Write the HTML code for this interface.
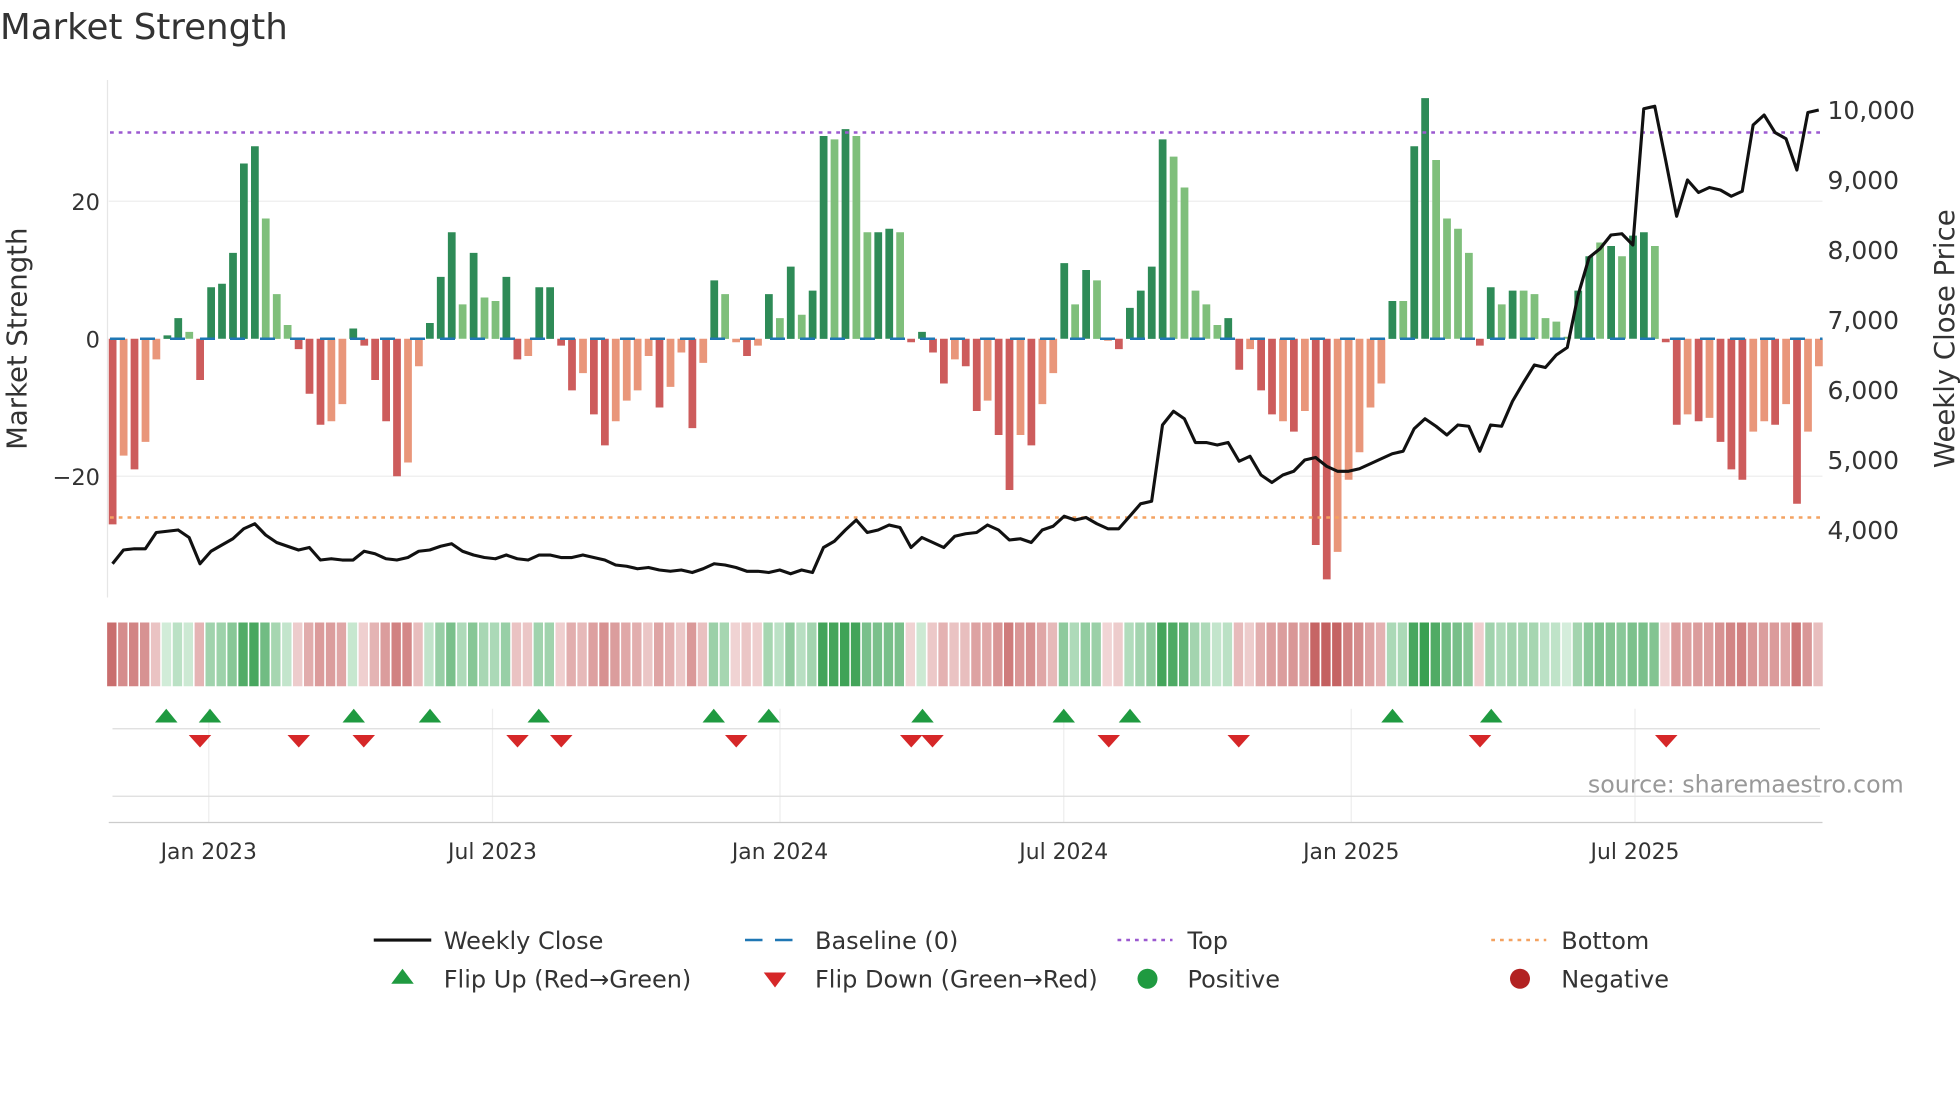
<!DOCTYPE html>
<html><head><meta charset="utf-8"><style>
html,body{margin:0;padding:0;background:#fff;}
svg{display:block;font-family:"DejaVu Sans","Liberation Sans",sans-serif;}
</style></head><body>
<svg id="s" width="1960" height="1102" viewBox="0 0 1568 881.6" xmlns="http://www.w3.org/2000/svg">
<rect width="1568" height="882" fill="#fff"/>
<text x="0" y="31" font-size="28.5" fill="#333">Market Strength</text>
<line x1="86" y1="64" x2="86" y2="478" stroke="#e6e6e6"/>
<line x1="87" y1="161" x2="1458" y2="161" stroke="#eee"/>
<line x1="87" y1="381" x2="1458" y2="381" stroke="#eee"/>
<g id="bars"></g>
<line x1="88" y1="271" x2="1458" y2="271" stroke="#1f77b4" stroke-width="2" stroke-dasharray="12,12"/>
<line x1="88" y1="106" x2="1458" y2="106" stroke="#9b59d0" stroke-width="2" stroke-dasharray="3,4"/>
<line x1="88" y1="414" x2="1458" y2="414" stroke="#f4a261" stroke-width="2" stroke-dasharray="3,4"/>
<polyline id="price" fill="none" stroke="#111" stroke-width="2.5" stroke-linejoin="round"/>
<g font-size="18" fill="#333">
<text x="80" y="168" text-anchor="end">20</text>
<text x="80" y="278" text-anchor="end">0</text>
<text x="80" y="388" text-anchor="end">−20</text>
</g>
<g font-size="20" fill="#333">
<text x="1462" y="95">10,000</text>
<text x="1462" y="151">9,000</text>
<text x="1462" y="207">8,000</text>
<text x="1462" y="263">7,000</text>
<text x="1462" y="319">6,000</text>
<text x="1462" y="375">5,000</text>
<text x="1462" y="431">4,000</text>
</g>
<text transform="translate(21,271) rotate(-90)" text-anchor="middle" font-size="22" fill="#333">Market Strength</text>
<text transform="translate(1563,271) rotate(-90)" text-anchor="middle" font-size="22" fill="#333">Weekly Close Price</text>
<g id="heat"></g>
<g stroke="#eee">
<line x1="167" y1="567" x2="167" y2="658"/><line x1="394" y1="567" x2="394" y2="658"/>
<line x1="624" y1="567" x2="624" y2="658"/><line x1="851" y1="567" x2="851" y2="658"/>
<line x1="1081" y1="567" x2="1081" y2="658"/><line x1="1308" y1="567" x2="1308" y2="658"/>
</g>
<line x1="90" y1="583" x2="1456" y2="583" stroke="#ddd"/>
<line x1="90" y1="637" x2="1456" y2="637" stroke="#ddd"/>
<line x1="87" y1="658" x2="1458" y2="658" stroke="#ccc"/>
<g id="marks"></g>
<text x="1523" y="634" text-anchor="end" font-size="19" fill="#999">source: sharemaestro.com</text>
<g font-size="17.5" fill="#333" text-anchor="middle">
<text x="167" y="687">Jan 2023</text><text x="394" y="687">Jul 2023</text>
<text x="624" y="687">Jan 2024</text><text x="851" y="687">Jul 2024</text>
<text x="1081" y="687">Jan 2025</text><text x="1308" y="687">Jul 2025</text>
</g>
<g font-size="19.2" fill="#333">
<line x1="299" y1="752" x2="345" y2="752" stroke="#111" stroke-width="2.5"/>
<text x="355" y="759">Weekly Close</text>
<line x1="596" y1="752" x2="640" y2="752" stroke="#1f77b4" stroke-width="2" stroke-dasharray="14,10"/>
<text x="652" y="759">Baseline (0)</text>
<line x1="894" y1="752" x2="938" y2="752" stroke="#9b59d0" stroke-width="2" stroke-dasharray="3,4"/>
<text x="950" y="759">Top</text>
<line x1="1193" y1="752" x2="1237" y2="752" stroke="#f4a261" stroke-width="2" stroke-dasharray="3,4"/>
<text x="1249" y="759">Bottom</text>
<polygon points="313,787 331,787 322,775" fill="#1f9a40"/>
<text x="355" y="790">Flip Up (Red→Green)</text>
<polygon points="611,778 629,778 620,790" fill="#d62728"/>
<text x="652" y="790">Flip Down (Green→Red)</text>
<circle cx="918" cy="783" r="8" fill="#1f9a40"/>
<text x="950" y="790">Positive</text>
<circle cx="1216" cy="783" r="8" fill="#b22222"/>
<text x="1249" y="790">Negative</text>
</g>
</svg>
<script>
var V="-27d -17l -19d -15l -3l .5d 3d 1l -6d 7.5d 8d 12.5d 25.5d 28d 17.5l 6.5l 2l -1.5d -8d -12.5d -12l -9.5l 1.5d -1d -6d -12d -20d -18l -4l 2.3d 9d 15.5d 5l 12.5d 6l 5.5l 9d -3d -2.5l 7.5d 7.5d -1d -7.5d -5l -11d -15.5d -12l -9l -7.5l -2.5l -10d -7l -2l -13d -3.5l 8.5d 6.5l -.5l -2.5d -1l 6.5d 3l 10.5d 3.5l 7d 29.5d 29l 30.5d 29.5l 15.5l 15.5d 16d 15.5l -.5d 1d -2d -6.5d -3l -4d -10.5d -9l -14d -22d -14l -15.5d -9.5l -5l 11d 5l 10d 8.5l -.3l -1.5d 4.5d 7d 10.5d 29d 26.5l 22l 7l 5l 2l 3d -4.5d -1.5l -7.5d -11d -12l -13.5d -10.5l -30d -35d -31l -20.5l -16.5l -10l -6.5l 5.5d 5.5l 28d 35d 26l 17.5l 16l 12.5l -1d 7.5d 5l 7d 7l 6.5l 3l 2.5l .3l 7d 12d 14l 13.5d 12l 15d 15.5d 13.5l -.5d -12.5d -11l -12d -11.5l -15d -19d -20.5d -13.5l -12l -12.5d -9.5l -24d -13.5l -4l".split(" ");
var P=[451,440,439,439,426,425,424,430,451,441,436,431,423,419,428,434,437,440,438,448,447,448,448,441,443,447,448,446,441,440,437,435,441,444,446,447,444,447,448,444,444,446,446,444,446,448,452,453,455,454,456,457,456,458,455,451,452,454,457,457,458,456,459,456,458,438,433,424,416,426,424,420,422,438,430,434,438,429,427,426,420,424,432,431,434,424,421,413,416,414,419,423,423,413,403,401,340,329,335,354,354,356,354,369,365,380,386,380,377,368,366,373,377,377,375,371,367,363,361,343,335,341,348,340,341,361,340,341,321,306,292,294,284,278,236,206,199,188,187,196,87,85,128,173,144,154,150,152,157,153,100,92,106,111,136,90,88];
var n=V.length,dx=(1455-90)/(n-1),b="",h="";
function mix(a,c,t){return "rgb("+a.map(function(x,i){return Math.round(x+(c[i]-x)*t)}).join(",")+")";}
for(var i=0;i<n;i++){var s=V[i],v=parseFloat(s),d=s.slice(-1)=="d",x=90+i*dx;
var col=v>=0?(d?"#2e8b57":"#7fbf7b"):(d?"#cd5c5c":"#e9967a");
var y0=271,y1=271-v*5.5;b+='<rect x="'+(x-3).toFixed(1)+'" y="'+Math.min(y0,y1).toFixed(1)+'" width="6.2" height="'+Math.abs(y1-y0).toFixed(1)+'" fill="'+col+'"/>';
var t=Math.min(Math.abs(v)/32,1);t=Math.pow(t,0.7);
var hc=v>=0?mix([218,240,224],[58,160,82],t):mix([243,218,218],[196,96,96],t);
h+='<rect x="'+(x-4.3).toFixed(1)+'" y="498" width="'+(dx-1.3).toFixed(1)+'" height="51" fill="'+hc+'"/>';}
document.getElementById("bars").innerHTML=b;document.getElementById("heat").innerHTML=h;
var pts=[];for(var i=0;i<P.length;i++)pts.push((90+i*(1455-90)/(P.length-1)).toFixed(1)+","+P[i]);
document.getElementById("price").setAttribute("points",pts.join(" "));
var up=[133,168,283,344,431,571,615,738,851,904,1114,1193],dn=[160,239,291,414,449,589,729,746,887,991,1184,1333],m="";
up.forEach(function(x){m+='<polygon points="'+(x-9)+',578 '+(x+9)+',578 '+x+',567" fill="#1f9a40"/>'});
dn.forEach(function(x){m+='<polygon points="'+(x-9)+',588 '+(x+9)+',588 '+x+',598" fill="#d62728"/>'});
document.getElementById("marks").innerHTML=m;
</script>
</body></html>
